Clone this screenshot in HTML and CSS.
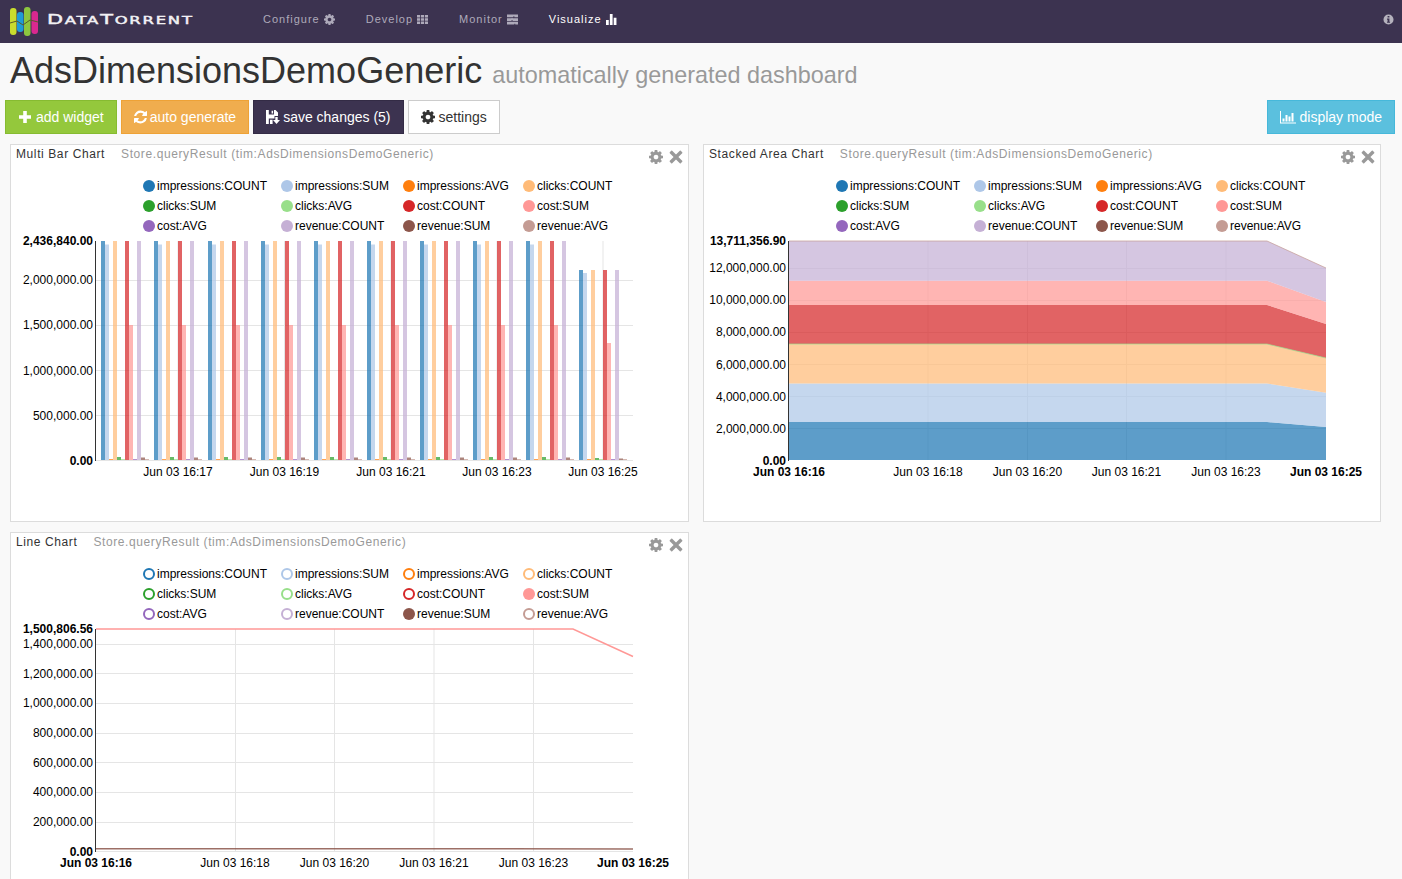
FILE: index.html
```html
<!DOCTYPE html>
<html lang="en">

<head>
    <meta charset="UTF-8">
    <title>AdsDimensionsDemoGeneric</title>
    <link rel="stylesheet" href="styles.css">
</head>

<body>
    <!-- shared icons -->
    <svg class="icon-defs" width="0" height="0">
        <defs>
            <symbol id="i-cog" viewBox="128 128 1536 1536">
                <path d="M1152 896q0-106-75-181t-181-75-181 75-75 181 75 181 181 75 181-75 75-181zm512-109v222q0 12-8 23t-20 13l-185 28q-19 54-39 91 35 50 107 138 10 12 10 25t-9 23q-27 37-99 108t-94 71q-12 0-26-9l-138-108q-44 23-91 38-16 136-29 186-7 28-36 28h-222q-14 0-24.5-8.5t-11.5-21.5l-28-184q-49-16-90-37l-141 107q-10 9-25 9-14 0-25-11-126-114-165-168-7-10-7-23 0-12 8-23 15-21 51-66.5t54-70.5q-27-50-41-99l-183-27q-13-2-21-12.5t-8-23.5v-222q0-12 8-23t19-13l186-28q14-46 39-92-40-57-107-138-10-12-10-24 0-10 9-23 26-36 98.5-107.5t94.5-71.5q13 0 26 10l138 107q44-23 91-38 16-136 29-186 7-28 36-28h222q14 0 24.5 8.5t11.5 21.5l28 184q49 16 90 37l142-107q9-9 24-9 13 0 25 10 129 119 165 170 7 8 7 22 0 12-8 23-15 21-51 66.5t-54 70.5q26 50 41 98l183 28q13 2 21 12.5t8 23.5z" />
            </symbol>
            <symbol id="i-times" viewBox="0 0 14 14">
                <path d="M3.2 0.8 7 4.6 10.8 0.8q.5-.5 1 0l1.4 1.4q.5.5 0 1L9.4 7l3.8 3.8q.5.5 0 1l-1.4 1.4q-.5.5-1 0L7 9.4l-3.8 3.8q-.5.5-1 0L.8 11.8q-.5-.5 0-1L4.6 7 .8 3.2q-.5-.5 0-1L2.2.8q.5-.5 1 0z" />
            </symbol>
            <symbol id="i-th" viewBox="0 0 12 12">
                <path d="M0 1h3.4v2.8H0zM4.3 1h3.4v2.8H4.3zM8.6 1H12v2.8H8.6zM0 4.6h3.4v2.8H0zM4.3 4.6h3.4v2.8H4.3zM8.6 4.6H12v2.8H8.6zM0 8.2h3.4V11H0zM4.3 8.2h3.4V11H4.3zM8.6 8.2H12V11H8.6z" />
            </symbol>
            <symbol id="i-tasks" viewBox="0 0 12 12">
                <path d="M0 .5h12v3H8V2.400H7v1.100H0zM0 4.500h5v-.1h1v.1h6v3H6v-.9H5v.9H0zM0 8.500h12v3H9v-1H8v1H0z" />
            </symbol>
            <symbol id="i-bars" viewBox="0 0 12 12">
                <path d="M0 6.500h3V12H0zM4.200 0h3v12h-3zM8.400 4h3v8h-3z" />
            </symbol>
        </defs>
    </svg>

    <header class="navbar">
        <div class="brand">
            <svg class="logo" width="28" height="30" viewBox="10 4 28 30">
                <rect class="logo-a" x="10" y="5" width="6.500" height="27" rx="3" />
                <rect class="logo-b" x="17" y="9" width="6.500" height="20" rx="3" />
                <rect class="logo-c" x="24" y="4" width="6.500" height="29" rx="3" />
                <rect class="logo-d" x="31.500" y="8" width="6.500" height="23" rx="3" />
                <polyline class="logo-line" points="10,20 17,18 23,22 30,17 38,19" />
            </svg>
            <span class="brand-name"><span class="brand-cap">D</span>ATA<span class="brand-cap">T</span>ORRENT</span>
        </div>
        <nav class="nav-links">
            <a class="nav-link">Configure <svg class="nav-icon"><use href="#i-cog" /></svg></a>
            <a class="nav-link">Develop <svg class="nav-icon"><use href="#i-th" /></svg></a>
            <a class="nav-link">Monitor <svg class="nav-icon"><use href="#i-tasks" /></svg></a>
            <a class="nav-link active">Visualize <svg class="nav-icon"><use href="#i-bars" /></svg></a>
        </nav>
        <svg class="info-icon" viewBox="0 0 12 12" width="11" height="11">
            <path fill-rule="evenodd" d="M6 .5a5.500 5.500 0 1 0 0 11 5.500 5.500 0 0 0 0-11zM5 2.200h2v1.600H5zM4.400 5h2.600v3.400h.7v1.200H4.400V8.400H5V6.200h-.6z" />
        </svg>
    </header>

    <div class="page-title">
        <h1>AdsDimensionsDemoGeneric</h1>
        <small>automatically generated dashboard</small>
    </div>

    <div class="toolbar">
        <div class="toolbar-left">
            <button class="btn btn-green">
                <svg class="btn-icon" viewBox="0 0 14 14"><path d="M5.200 1h3.600v4.200H13v3.600H8.800V13H5.200V8.800H1V5.200h4.200z" /></svg>
                add widget
            </button>
            <button class="btn btn-orange">
                <svg class="btn-icon" viewBox="128 128 1536 1536"><path d="M1639 1056q0 5-1 7-64 268-268 434.5t-478 166.5q-146 0-282.5-55t-243.5-157l-129 129q-19 19-45 19t-45-19-19-45v-448q0-26 19-45t45-19h448q26 0 45 19t19 45-19 45l-137 137q71 66 161 102t187 36q134 0 250-65t186-179q11-17 53-117 8-23 30-23h192q13 0 22.5 9.5t9.5 22.5zm25-800v448q0 26-19 45t-45 19h-448q-26 0-45-19t-19-45 19-45l138-138q-148-137-349-137-134 0-250 65t-186 179q-11 17-53 117-8 23-30 23h-199q-13 0-22.5-9.5t-9.5-22.5v-7q65-268 270-434.5t480-166.5q146 0 284 55.5t245 156.5l130-129q19-19 45-19t45 19 19 45z" /></svg>
                auto generate
            </button>
            <button class="btn btn-purple">
                <svg class="btn-icon" viewBox="0 0 14 14"><path fill-rule="evenodd" d="M0 0h2.800v4.600H8V0h1.500L12 2.500V6H8.500v2.500H2.800V14H0zM5.600.8h1.500v2.800H5.600zM4 9.800h2.600V14H4zM9.300 7h2.400v3H14l-3.500 4L7 10h2.300z" /></svg>
                save changes (5)
            </button>
            <button class="btn btn-white">
                <svg class="btn-icon"><use href="#i-cog" /></svg>
                settings
            </button>
        </div>
        <button class="btn btn-info">
            <svg class="btn-icon wide" viewBox="0 0 16 14"><path d="M0 1h1v11.500h15V13.500H0zM2.500 8.500h2v3h-2zM5.500 5h2v6.500h-2zM8.500 6.500h2v5h-2zM11.500 3h2v8.500h-2z" /></svg>
            display mode
        </button>
    </div>

    <main class="widgets">
        <section class="widget">
            <div class="widget-head">
                <span class="widget-title">Multi Bar Chart</span>
                <span class="widget-source">Store.queryResult (tim:AdsDimensionsDemoGeneric)</span>
                <span class="widget-controls">
                    <svg class="ctl-icon"><use href="#i-cog" /></svg>
                    <svg class="ctl-icon"><use href="#i-times" /></svg>
                </span>
            </div>
            <svg class="chart" viewBox="11 165 677 356" width="677" height="356">
                <defs>
                    <g id="bar-group">
                        <rect class="bar s0" x="0" y="241" width="4" height="219" />
                        <rect class="bar s1" x="4" y="244.500" width="4" height="215.500" />
                        <rect class="bar s2" x="8" y="459" width="4" height="1" />
                        <rect class="bar s3" x="12" y="241" width="4" height="219" />
                        <rect class="bar s4" x="16" y="457" width="4" height="3" />
                        <rect class="bar s5" x="20" y="459" width="4" height="1" />
                        <rect class="bar s6" x="24" y="241" width="4" height="219" />
                        <rect class="bar s7" x="28" y="325" width="4" height="135" />
                        <rect class="bar s8" x="32" y="459" width="4" height="1" />
                        <rect class="bar s9" x="36" y="241" width="4" height="219" />
                        <rect class="bar s10" x="40" y="457.500" width="4" height="2.500" />
                        <rect class="bar s11" x="44" y="459" width="4" height="1" />
                    </g>
                </defs>
                <g class="legend" transform="translate(143 186)">
                    <circle class="dot s0" cx="6" cy="0" r="6" /><text x="14" y="4">impressions:COUNT</text>
                    <circle class="dot s1" cx="144" cy="0" r="6" /><text x="152" y="4">impressions:SUM</text>
                    <circle class="dot s2" cx="266" cy="0" r="6" /><text x="274" y="4">impressions:AVG</text>
                    <circle class="dot s3" cx="386" cy="0" r="6" /><text x="394" y="4">clicks:COUNT</text>
                    <circle class="dot s4" cx="6" cy="20" r="6" /><text x="14" y="24">clicks:SUM</text>
                    <circle class="dot s5" cx="144" cy="20" r="6" /><text x="152" y="24">clicks:AVG</text>
                    <circle class="dot s6" cx="266" cy="20" r="6" /><text x="274" y="24">cost:COUNT</text>
                    <circle class="dot s7" cx="386" cy="20" r="6" /><text x="394" y="24">cost:SUM</text>
                    <circle class="dot s8" cx="6" cy="40" r="6" /><text x="14" y="44">cost:AVG</text>
                    <circle class="dot s9" cx="144" cy="40" r="6" /><text x="152" y="44">revenue:COUNT</text>
                    <circle class="dot s10" cx="266" cy="40" r="6" /><text x="274" y="44">revenue:SUM</text>
                    <circle class="dot s11" cx="386" cy="40" r="6" /><text x="394" y="44">revenue:AVG</text>
                </g>
                <g class="grid">
                    <path d="M178 241V460M284.500 241V460M391 241V460M497 241V460M603 241V460" />
                    <path d="M96 280.500H633M96 325.500H633M96 370.500H633M96 415.500H633M96 460.500H633" />
                </g>
                <use href="#bar-group" x="101" />
                <use href="#bar-group" x="154" />
                <use href="#bar-group" x="208" />
                <use href="#bar-group" x="261" />
                <use href="#bar-group" x="314" />
                <use href="#bar-group" x="367" />
                <use href="#bar-group" x="420" />
                <use href="#bar-group" x="473" />
                <use href="#bar-group" x="526" />
                <g transform="translate(579 0)">
                    <rect class="bar s0" x="0" y="270" width="4" height="190" />
                    <rect class="bar s1" x="4" y="273" width="4" height="187" />
                    <rect class="bar s2" x="8" y="459" width="4" height="1" />
                    <rect class="bar s3" x="12" y="270" width="4" height="190" />
                    <rect class="bar s4" x="16" y="458" width="4" height="2" />
                    <rect class="bar s5" x="20" y="459" width="4" height="1" />
                    <rect class="bar s6" x="24" y="270" width="4" height="190" />
                    <rect class="bar s7" x="28" y="343" width="4" height="117" />
                    <rect class="bar s8" x="32" y="459" width="4" height="1" />
                    <rect class="bar s9" x="36" y="270" width="4" height="190" />
                    <rect class="bar s10" x="40" y="458.500" width="4" height="1.500" />
                    <rect class="bar s11" x="44" y="459" width="4" height="1" />
                </g>
                <path class="axis" d="M95.500 241V461" />
                <g class="y-labels">
                    <text class="strong" x="93" y="245">2,436,840.00</text>
                    <text x="93" y="284">2,000,000.00</text>
                    <text x="93" y="329">1,500,000.00</text>
                    <text x="93" y="375">1,000,000.00</text>
                    <text x="93" y="420">500,000.00</text>
                    <text class="strong" x="93" y="465">0.00</text>
                </g>
                <g class="x-labels">
                    <text x="178" y="476">Jun 03 16:17</text>
                    <text x="284.500" y="476">Jun 03 16:19</text>
                    <text x="391" y="476">Jun 03 16:21</text>
                    <text x="497" y="476">Jun 03 16:23</text>
                    <text x="603" y="476">Jun 03 16:25</text>
                </g>
            </svg>
        </section>

        <section class="widget">
            <div class="widget-head">
                <span class="widget-title">Stacked Area Chart</span>
                <span class="widget-source">Store.queryResult (tim:AdsDimensionsDemoGeneric)</span>
                <span class="widget-controls">
                    <svg class="ctl-icon"><use href="#i-cog" /></svg>
                    <svg class="ctl-icon"><use href="#i-times" /></svg>
                </span>
            </div>
            <svg class="chart" viewBox="704 165 676 356" width="676" height="356">
                <g class="legend" transform="translate(836 186)">
                    <circle class="dot s0" cx="6" cy="0" r="6" /><text x="14" y="4">impressions:COUNT</text>
                    <circle class="dot s1" cx="144" cy="0" r="6" /><text x="152" y="4">impressions:SUM</text>
                    <circle class="dot s2" cx="266" cy="0" r="6" /><text x="274" y="4">impressions:AVG</text>
                    <circle class="dot s3" cx="386" cy="0" r="6" /><text x="394" y="4">clicks:COUNT</text>
                    <circle class="dot s4" cx="6" cy="20" r="6" /><text x="14" y="24">clicks:SUM</text>
                    <circle class="dot s5" cx="144" cy="20" r="6" /><text x="152" y="24">clicks:AVG</text>
                    <circle class="dot s6" cx="266" cy="20" r="6" /><text x="274" y="24">cost:COUNT</text>
                    <circle class="dot s7" cx="386" cy="20" r="6" /><text x="394" y="24">cost:SUM</text>
                    <circle class="dot s8" cx="6" cy="40" r="6" /><text x="14" y="44">cost:AVG</text>
                    <circle class="dot s9" cx="144" cy="40" r="6" /><text x="152" y="44">revenue:COUNT</text>
                    <circle class="dot s10" cx="266" cy="40" r="6" /><text x="274" y="44">revenue:SUM</text>
                    <circle class="dot s11" cx="386" cy="40" r="6" /><text x="394" y="44">revenue:AVG</text>
                </g>
                <g class="grid">
                    <path d="M928 241V460M1027.500 241V460M1126.500 241V460M1226 241V460" />
                    <path d="M789 268.500H1326M789 300.500H1326M789 332.500H1326M789 364.500H1326M789 396.500H1326M789 428.500H1326" />
                </g>
                <polygon class="area s0" points="789,422 1267,422 1326,427 1326,460 789,460" />
                <polygon class="area s1" points="789,383.500 1267,383.500 1326,392.700 1326,427 1267,422 789,422" />
                <polygon class="area s3" points="789,344 1267,344 1326,358 1326,392.700 1267,383.500 789,383.500" />
                <polygon class="area s6" points="789,305 1267,305 1326,324 1326,358 1267,344 789,344" />
                <polygon class="area s7" points="789,280.700 1267,280.700 1326,302 1326,324 1267,305 789,305" />
                <polygon class="area s9" points="789,241 1267,241 1326,268 1326,302 1267,280.700 789,280.700" />
                <polyline class="thin t5" points="789,344 1267,344 1326,358" />
                <polyline class="thin t11" points="789,241 1267,241 1326,268" />
                <path class="axis" d="M788.500 241V461" />
                <g class="y-labels">
                    <text class="strong" x="786" y="245">13,711,356.90</text>
                    <text x="786" y="272">12,000,000.00</text>
                    <text x="786" y="304">10,000,000.00</text>
                    <text x="786" y="336">8,000,000.00</text>
                    <text x="786" y="369">6,000,000.00</text>
                    <text x="786" y="401">4,000,000.00</text>
                    <text x="786" y="433">2,000,000.00</text>
                    <text class="strong" x="786" y="465">0.00</text>
                </g>
                <g class="x-labels">
                    <text class="strong" x="789" y="476">Jun 03 16:16</text>
                    <text x="928" y="476">Jun 03 16:18</text>
                    <text x="1027.500" y="476">Jun 03 16:20</text>
                    <text x="1126.500" y="476">Jun 03 16:21</text>
                    <text x="1226" y="476">Jun 03 16:23</text>
                    <text class="strong" x="1326" y="476">Jun 03 16:25</text>
                </g>
            </svg>
        </section>

        <section class="widget">
            <div class="widget-head">
                <span class="widget-title">Line Chart</span>
                <span class="widget-source">Store.queryResult (tim:AdsDimensionsDemoGeneric)</span>
                <span class="widget-controls">
                    <svg class="ctl-icon"><use href="#i-cog" /></svg>
                    <svg class="ctl-icon"><use href="#i-times" /></svg>
                </span>
            </div>
            <svg class="chart" viewBox="11 553 677 356" width="677" height="356">
                <g class="legend" transform="translate(143 574)">
                    <circle class="ring t0" cx="6" cy="0" r="5" /><text x="14" y="4">impressions:COUNT</text>
                    <circle class="ring t1" cx="144" cy="0" r="5" /><text x="152" y="4">impressions:SUM</text>
                    <circle class="ring t2" cx="266" cy="0" r="5" /><text x="274" y="4">impressions:AVG</text>
                    <circle class="ring t3" cx="386" cy="0" r="5" /><text x="394" y="4">clicks:COUNT</text>
                    <circle class="ring t4" cx="6" cy="20" r="5" /><text x="14" y="24">clicks:SUM</text>
                    <circle class="ring t5" cx="144" cy="20" r="5" /><text x="152" y="24">clicks:AVG</text>
                    <circle class="ring t6" cx="266" cy="20" r="5" /><text x="274" y="24">cost:COUNT</text>
                    <circle class="dot s7" cx="386" cy="20" r="6" /><text x="394" y="24">cost:SUM</text>
                    <circle class="ring t8" cx="6" cy="40" r="5" /><text x="14" y="44">cost:AVG</text>
                    <circle class="ring t9" cx="144" cy="40" r="5" /><text x="152" y="44">revenue:COUNT</text>
                    <circle class="dot s10" cx="266" cy="40" r="6" /><text x="274" y="44">revenue:SUM</text>
                    <circle class="ring t11" cx="386" cy="40" r="5" /><text x="394" y="44">revenue:AVG</text>
                </g>
                <g class="grid">
                    <path d="M235.500 629V851M334.500 629V851M434 629V851M533.500 629V851" />
                    <path d="M96 644.500H633M96 673.500H633M96 703.500H633M96 733.500H633M96 762.500H633M96 792.500H633M96 822.500H633M96 851.500H633" />
                </g>
                <polyline class="line t7" points="96,629 573,629 633,656.500" />
                <polyline class="line faded t10" points="96,848.700 633,848.900" />
                <path class="axis" d="M95.500 629V852" />
                <g class="y-labels">
                    <text class="strong" x="93" y="633">1,500,806.56</text>
                    <text x="93" y="648">1,400,000.00</text>
                    <text x="93" y="678">1,200,000.00</text>
                    <text x="93" y="707">1,000,000.00</text>
                    <text x="93" y="737">800,000.00</text>
                    <text x="93" y="767">600,000.00</text>
                    <text x="93" y="796">400,000.00</text>
                    <text x="93" y="826">200,000.00</text>
                    <text class="strong" x="93" y="856">0.00</text>
                </g>
                <g class="x-labels">
                    <text class="strong" x="96" y="867">Jun 03 16:16</text>
                    <text x="235" y="867">Jun 03 16:18</text>
                    <text x="334.500" y="867">Jun 03 16:20</text>
                    <text x="434" y="867">Jun 03 16:21</text>
                    <text x="533.500" y="867">Jun 03 16:23</text>
                    <text class="strong" x="633" y="867">Jun 03 16:25</text>
                </g>
            </svg>
        </section>
    </main>
</body>

</html>
```

FILE: styles.css
```css
:root {
    --purple: #3c3350;
    --page-bg: #f9f9f9;
    --border: #dcdcdc;
    --grid: #e5e5e5;
}

* {
    margin: 0;
    padding: 0;
    box-sizing: border-box;
}

html,
body {
    height: 100%;
    overflow: hidden;
}

body {
    font-family: "Liberation Sans", Arial, sans-serif;
    font-size: 14px;
    color: #333;
    background-color: var(--page-bg);
}

.icon-defs {
    display: block;
    height: 0;
}

/* Top bar */
.navbar {
    height: 43px;
    display: flex;
    align-items: center;
    background-color: var(--purple);
    padding: 0 8px 5px 10px;
}

.brand {
    width: 253px;
    display: flex;
    align-items: center;
    gap: 9px;
}

.logo {
    flex: none;
    margin-top: 5px;
}

.logo-a { fill: #c9dc2e; }
.logo-b { fill: #1f9bd7; }
.logo-c { fill: #8dc63f; }
.logo-d { fill: #d9288f; }

.logo-line {
    fill: none;
    stroke: #5a5a2a;
    stroke-width: 1;
}

/* wordmark is a very wide face, stretched to get close */
.brand-name {
    display: inline-block;
    font-family: "DejaVu Sans", sans-serif;
    font-size: 11px;
    letter-spacing: 1.2px;
    color: #f2f1f4;
    -webkit-text-stroke: 0.45px #f2f1f4;
    transform: scaleX(1.49);
    transform-origin: left center;
    white-space: nowrap;
}

.brand-cap {
    font-size: 14px;
}

.nav-links {
    display: flex;
    gap: 31px;
}

.nav-link {
    display: flex;
    align-items: center;
    gap: 4px;
    font-size: 11px;
    letter-spacing: 1px;
    color: #aeaaba;
}

.nav-link.active {
    color: #ffffff;
}

.nav-icon {
    width: 11px;
    height: 11px;
    fill: currentColor;
}

.info-icon {
    margin-left: auto;
    fill: #b5b2bd;
}

/* Heading */
.page-title {
    height: 57px;
    padding: 5px 0 0 10px;
    display: flex;
    align-items: baseline;
    gap: 10px;
}

.page-title h1 {
    font-size: 36px;
    font-weight: 400;
    line-height: 46px;
    color: #333;
}

.page-title small {
    font-size: 23.400px;
    color: #999;
}

/* Buttons */
.toolbar {
    display: flex;
    justify-content: space-between;
    padding: 0 7px 0 5px;
    margin-bottom: 10px;
}

.toolbar-left {
    display: flex;
    gap: 4px;
}

.btn {
    height: 34px;
    padding: 0 12px;
    display: flex;
    align-items: center;
    gap: 4px;
    font-family: inherit;
    font-size: 14px;
    border: 1px solid transparent;
    border-radius: 0;
    color: #ffffff;
}

.btn-icon {
    width: 14px;
    height: 14px;
    fill: currentColor;
}

.btn-icon.wide {
    width: 16px;
}

.btn-green {
    background-color: #94c83c;
    border-color: #86bb31;
}

.btn-orange {
    gap: 3px;
    background-color: #f0ad4e;
    border-color: #eea236;
}

.btn-orange .btn-icon {
    width: 13px;
}

.btn-purple {
    gap: 3px;
    background-color: var(--purple);
    border-color: #332b45;
}

.btn-white {
    background-color: #ffffff;
    border-color: #cccccc;
    color: #333;
}

.btn-info {
    background-color: #5bc0de;
    border-color: #46b8da;
}

/* Widgets */
.widgets {
    display: grid;
    grid-template-columns: 679px 678px;
    column-gap: 14px;
    row-gap: 10px;
    padding-left: 10px;
}

.widget {
    height: 378px;
    background-color: #ffffff;
    border: 1px solid var(--border);
}

.widget-head {
    height: 20px;
    display: flex;
    align-items: center;
    gap: 16px;
    padding: 0 5px 2px;
    font-size: 12px;
    letter-spacing: 0.6px;
}

.widget-title {
    color: #333;
}

.widget-source {
    color: #999;
}

.widget-controls {
    margin-left: auto;
    display: flex;
    align-items: center;
    gap: 6px;
    padding-top: 6px;
}

.ctl-icon {
    width: 14px;
    height: 14px;
    fill: #999;
}

.chart {
    display: block;
    font-size: 12px;
}

.chart text {
    fill: #000;
}

.grid path {
    fill: none;
    stroke: var(--grid);
    stroke-width: 1;
}

.axis {
    fill: none;
    stroke: #333;
    stroke-width: 1;
}

.y-labels text {
    text-anchor: end;
}

.x-labels text {
    text-anchor: middle;
}

.chart text.strong {
    font-weight: 700;
}

/* Series colours */
.s0 { fill: #1f77b4; }
.s1 { fill: #aec7e8; }
.s2 { fill: #ff7f0e; }
.s3 { fill: #ffbb78; }
.s4 { fill: #2ca02c; }
.s5 { fill: #98df8a; }
.s6 { fill: #d62728; }
.s7 { fill: #ff9896; }
.s8 { fill: #9467bd; }
.s9 { fill: #c5b0d5; }
.s10 { fill: #8c564b; }
.s11 { fill: #c49c94; }

.t0 { stroke: #1f77b4; }
.t1 { stroke: #aec7e8; }
.t2 { stroke: #ff7f0e; }
.t3 { stroke: #ffbb78; }
.t4 { stroke: #2ca02c; }
.t5 { stroke: #98df8a; }
.t6 { stroke: #d62728; }
.t7 { stroke: #ff9896; }
.t8 { stroke: #9467bd; }
.t9 { stroke: #c5b0d5; }
.t10 { stroke: #8c564b; }
.t11 { stroke: #c49c94; }

.bar,
.area {
    fill-opacity: 0.72;
}

.ring {
    fill: #ffffff;
    stroke-width: 2;
}

.line {
    fill: none;
    stroke-width: 1.5;
}

.line.faded {
    stroke-opacity: 0.85;
}

.thin {
    fill: none;
    stroke-width: 0.7;
}
```
